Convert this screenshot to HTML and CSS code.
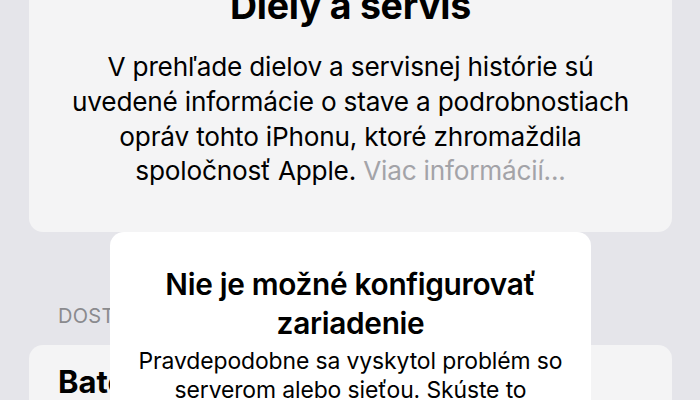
FILE: index.html
```html
<!DOCTYPE html>
<html lang="sk">
<head>
<meta charset="utf-8">
<title>Diely a servis</title>
<link rel="stylesheet" href="styles.css">
</head>
<body>
<div class="screen">
  <section class="card intro">
    <h1 class="intro-title">Diely a servis</h1>
    <p class="intro-text">V prehľade dielov a servisnej histórie sú<br>uvedené informácie o stave a podrobnostiach<br>opráv tohto iPhonu, ktoré zhromaždila<br>spoločnosť Apple. <span class="link">Viac informácií...</span></p>
  </section>
  <div class="section-label">DOSTUPNÉ ÚDAJE</div>
  <section class="card list">
    <div class="row-title">Batéria</div>
  </section>
  <div class="alert" role="alertdialog">
    <h2 class="alert-title">Nie je možné konfigurovať<br>zariadenie</h2>
    <p class="alert-text">Pravdepodobne sa vyskytol problém so<br>serverom alebo sieťou. Skúste to<br>znova neskôr.</p>
  </div>
</div>
</body>
</html>
```

FILE: styles.css
```css
* { box-sizing: border-box; }
html, body {
  margin: 0;
  padding: 0;
  background: #e5e5ea;
  width: 700px;
  height: 400px;
  overflow: hidden;
  font-family: "Inter", "Noto Sans", sans-serif;
  color: #000;
}
.screen {
  position: relative;
  width: 700px;
  height: 400px;
  overflow: hidden;
  padding: 0 28px 0 29px;
}
.card {
  background: #f4f4f5;
  border-radius: 14px;
}
.intro {
  border-radius: 0 0 14px 14px;
  padding: 0 10px 43px;
  text-align: center;
}
.intro-title {
  margin: -16px 0 0;
  font-size: 37.5px;
  line-height: 44px;
  font-weight: 700;
  letter-spacing: -0.3px;
}
.intro-text {
  margin: 22px 0 0;
  font-size: 26.2px;
  line-height: 34.8px;
  letter-spacing: -0.2px;
}
.link { color: #a3a3a8; }
.section-label {
  margin: 72px 0 0 29px;
  font-size: 20px;
  line-height: 24px;
  color: #8a8a8e;
  letter-spacing: 0.3px;
}
.list {
  margin-top: 17px;
  padding: 18px 29px;
  height: 120px;
}
.row-title {
  font-size: 31px;
  font-weight: 700;
  line-height: 38px;
}
.alert {
  position: absolute;
  left: 110px;
  top: 232px;
  width: 481px;
  height: 240px;
  background: #ffffff;
  border-radius: 14px;
  text-align: center;
  padding: 33px 10px 0;
}
.alert-title {
  margin: 0;
  font-size: 29.8px;
  line-height: 39px;
  font-weight: 600;
  letter-spacing: -0.3px;
}
.alert-text {
  margin: 4px 0 0;
  font-size: 22.9px;
  line-height: 29px;
  letter-spacing: -0.1px;
}
```
